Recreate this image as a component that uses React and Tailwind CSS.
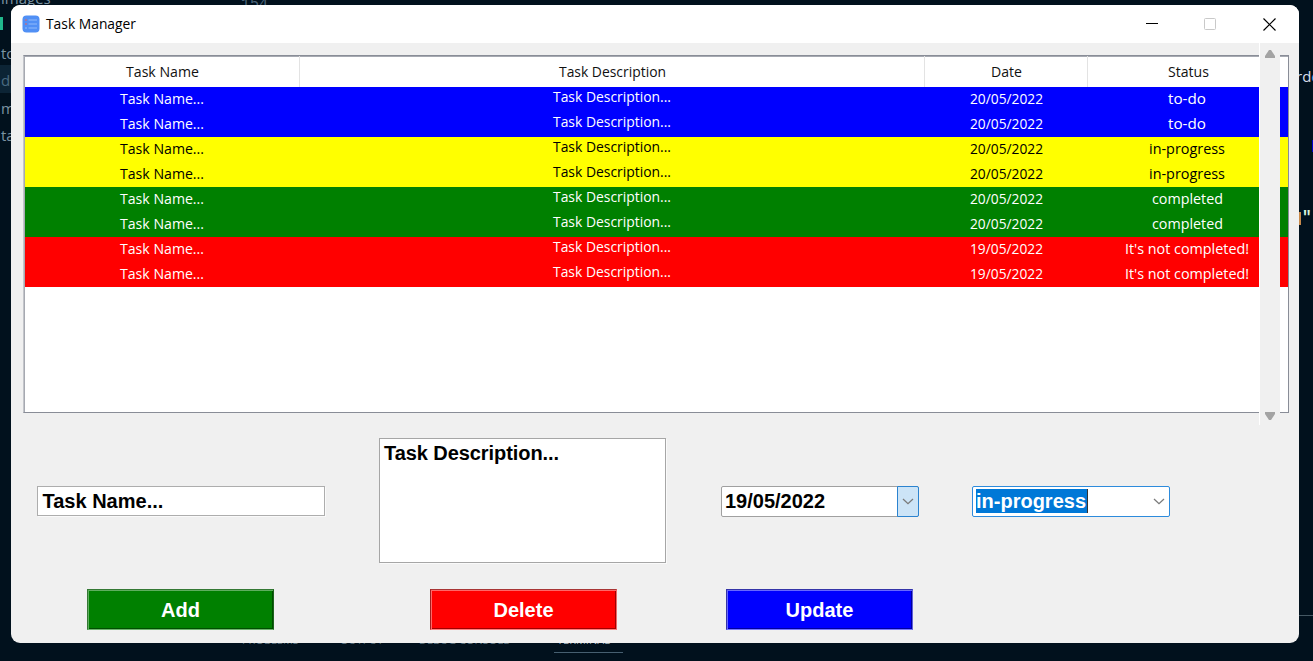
import React from "react";

const groups = [
  { status: "to-do", date: "20/05/2022", color: "bg-[#0000ff] text-white" },
  { status: "in-progress", date: "20/05/2022", color: "bg-[#ffff00] text-black" },
  { status: "completed", date: "20/05/2022", color: "bg-[#008000] text-white" },
  { status: "It's not completed!", date: "19/05/2022", color: "bg-[#ff0000] text-white" },
];
const rows = groups.flatMap((g) => [g, g]);

function T({ w, children, className = "" }) {
  return (
    <svg width={w} height="20" className={"block overflow-visible fill-current " + className}>
      <text x="0" y="15" textLength={w} lengthAdjust="spacingAndGlyphs">{children}</text>
    </svg>
  );
}

const statusWidth = { "to-do": 38, "in-progress": 76, completed: 71, "It's not completed!": 124 };

function Chevron() {
  return (
    <svg width="12" height="8" viewBox="0 0 12 8" fill="none" stroke="#7a7a7a" strokeWidth="1.3">
      <path d="M1 2 L6 6.7 L11 2" />
    </svg>
  );
}

function Button({ label, className }) {
  return (
    <button className={"flex h-[41px] w-[187px] items-center justify-center border text-[20px] font-bold text-white " + className}>
      {label}
    </button>
  );
}

export default function App() {
  return (
    <div className="relative h-[661px] w-[1313px] overflow-hidden bg-[#01111d] font-['Open_Sans',sans-serif]">
      <div className="absolute inset-0 text-[15px] leading-[20px] text-[#7b93a2]">
        <div className="absolute top-[-12px] left-px">images</div>
        <div className="absolute top-[-5px] left-[241px] font-['Liberation_Mono',monospace] text-[15px] text-[#4b6479]">154</div>
        <div className="absolute top-[17px] left-0 h-[13px] w-[3px] bg-[#20b88c]" />
        <div className="absolute top-[65px] left-0 h-[28px] w-[12px] bg-[#0c2435]" />
        <div className="absolute top-[43px] left-px">to</div>
        <div className="absolute top-[70px] left-px text-[#4a6b80]">d</div>
        <div className="absolute top-[98px] left-px">m</div>
        <div className="absolute top-[125px] left-px">ta</div>
        <div className="absolute top-[66px] left-[1296px] text-[15px] text-[#d6deeb]">rd<span className="text-[#4f9fd8]">e</span></div>
        <div className="absolute top-[208px] left-[1302px] font-['Liberation_Mono',monospace] text-[16px] font-bold text-[#d9f5dd]">"</div>
        <div className="absolute top-[212px] left-[1299px] h-[13px] w-[2px] bg-[#c98a4b]" />
        <div className="absolute top-[140px] left-[1312px] h-[12px] w-px bg-[#0000c8]" />
        <div className="absolute top-[615px] left-[1299px] h-px w-[14px] bg-[#455863]" />
        <div className="absolute top-[630px] left-[242px] flex text-[11px] text-[#5f7480]">
          <span className="w-[98px]">PROBLEMS</span><span className="w-[79px]">OUTPUT</span>
          <span className="w-[138px]">DEBUG CONSOLE</span><span className="text-[#a7b6c0]">TERMINAL</span>
        </div>
        <div className="absolute top-[652px] left-[554px] h-px w-[69px] bg-[#465f70]" />
      </div>

      <main className="absolute top-[5px] left-[11px] flex h-[638px] w-[1288px] flex-col overflow-hidden rounded-[9px] bg-[#f0f0f0]">
        <header className="flex h-[38px] shrink-0 items-center bg-white pl-[11px] text-black">
          <svg width="18" height="18" viewBox="0 0 18 18" className="-mt-px">
            <rect x="0.5" y="0.5" width="17" height="17" rx="4" fill="#5190f5" />
            <path d="M6.5 5H15M6.5 9H15M6.5 13H15" stroke="#8fbafc" strokeWidth="1.1" />
            <path d="M3 5H5M3 9H5" stroke="#b8708f" strokeWidth="1.5" />
            <path d="M3 13H5" stroke="#7eb0fb" strokeWidth="1.3" />
          </svg>
          <T w={90} className="ml-[6px] text-[15px]">Task Manager</T>
          <div className="ml-auto flex items-center pr-[23.5px]">
            <svg width="12" height="12" className="mr-[46px]"><path d="M0 5.5H12" stroke="#000" /></svg>
            <svg width="12" height="12" className="mr-[46.5px]"><rect x="0.5" y="0.5" width="11" height="11" rx="1" fill="none" stroke="#c9c9c9" /></svg>
            <svg width="13" height="13"><path d="M0.5 0.5L12.5 12.5M12.5 0.5L0.5 12.5" stroke="#000" strokeWidth="1.2" /></svg>
          </div>
        </header>

        <section className="relative mt-3 ml-[12px] h-[358px] w-[1266px] shrink-0 border border-l-[#c3c5ca] border-[#898d97] bg-white text-[14.5px] shadow-[inset_1px_1px_#a6a9b1]">
          <div className="grid h-[31px] grid-cols-[276px_625px_163px_200px] text-[#111]">
            <div className="flex justify-center border-r border-[#e3e3e3] pt-[5.5px] pl-[2px]"><T w={73}>Task Name</T></div>
            <div className="flex justify-center border-r border-[#e3e3e3] pt-[5.5px]"><T w={107}>Task Description</T></div>
            <div className="flex justify-center border-r border-[#e3e3e3] pt-[5.5px]"><T w={31}>Date</T></div>
            <div className="flex justify-center pt-[5.5px]"><T w={41}>Status</T></div>
          </div>
          {rows.map((r, i) => (
            <div key={i} className={"ml-px grid h-[25px] grid-cols-[274px_626px_162px_201px] " + r.color}>
              <div className="flex justify-center pt-[2px]"><T w={84}>Task Name...</T></div>
              <div className="flex justify-center pr-px"><T w={118}>Task Description...</T></div>
              <div className="flex justify-center pt-[2px]"><T w={73}>{r.date}</T></div>
              <div className="flex justify-center pt-[2px] pr-px"><T w={statusWidth[r.status]}>{r.status}</T></div>
            </div>
          ))}
          <div className="absolute top-[-13px] left-[1235px] flex h-[382px] w-[21px] flex-col items-center justify-between border-l border-white bg-[#f0f0f0] pt-[7px] pb-[5px]">
            <svg width="10" height="8"><path d="M4 0H6L10 6V8H0V6Z" fill="#a3a3a3" /></svg>
            <svg width="10" height="8"><path d="M4 8H6L10 2V0H0V2Z" fill="#a3a3a3" /></svg>
          </div>
        </section>

        <form className="font-['Liberation_Sans',sans-serif]">
          <div className="mt-[25px] ml-[26px] flex h-[125px] items-center text-[20px] font-bold text-black">
            <div className="flex h-[30px] w-[288px] items-center border border-[#adadad] bg-white pl-[4.5px] shadow-[1px_1px_#fafafa]">Task Name...</div>
            <div className="ml-[54px] h-[125px] w-[287px] border border-[#a6a6a6] bg-white pl-[4px] leading-[29px] tracking-[-0.07px] shadow-[1px_1px_#fafafa]">Task Description...</div>
            <div className="mt-px ml-[55px] flex h-[31px] w-[198px] items-center rounded-[2px] border border-[#a0a0a0] bg-white pb-px pl-[3px]">
              19/05/2022
              <div className="-mt-px -mr-px -mb-[2px] ml-auto flex h-[31px] w-[22px] items-center justify-center rounded-r-[2px] border border-[#2b83cf] bg-[#cce4f7]"><Chevron /></div>
            </div>
            <div className="mt-px ml-[53px] flex h-[31px] w-[198px] items-center rounded-[2px] border border-[#2d8bdc] bg-white pr-[4px] pl-[3px]">
              <div className="flex h-[24px] w-[112px] items-center border-r border-[#333] bg-[#0078d7] text-white">in-progress</div>
              <div className="ml-auto"><Chevron /></div>
            </div>
          </div>
          <div className="mt-[26px] ml-[76px] flex">
            <Button label="Add" className="border-t-[#347834] border-r-[#1d651d] border-b-[#6eb36e] border-l-[#347834] bg-[#008000] shadow-[inset_1px_1px_#5eae5e,inset_-1px_-1px_#004e00]" />
            <Button label="Delete" className="ml-[156px] border-t-[#a83535] border-r-[#ed6a6a] border-b-[#ff8080] border-l-[#a02020] bg-[#ff0000] shadow-[inset_1px_1px_#ff6868,inset_-1px_-1px_#a00000]" />
            <Button label="Update" className="ml-[109px] border-t-[#3434a8] border-r-[#6060dd] border-b-[#7878ff] border-l-[#3434a8] bg-[#0000ff] shadow-[inset_1px_1px_#6868ff,inset_-1px_-1px_#0000a0]" />
          </div>
        </form>
      </main>
    </div>
  );
}
